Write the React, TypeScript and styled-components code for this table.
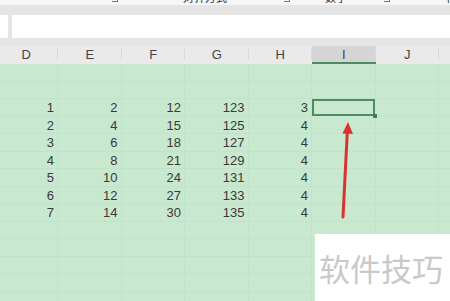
import React from "react";
import styled, { createGlobalStyle } from "styled-components";

const Global = createGlobalStyle`
  html, body { margin: 0; padding: 0; background: #ffffff; }
  body { font-family: "Liberation Sans", Arial, "Noto Sans CJK SC", sans-serif; }
`;

const Screen = styled.div`
  position: relative;
  width: 450px;
  height: 301px;
  overflow: hidden;
  background: #e5e5e5;
`;

const Ribbon = styled.div`
  display: flex;
  height: 5px;
  background: #f6f6f6;
  overflow: hidden;
  align-items: flex-end;
`;

const RibbonGroup = styled.div<{ $w: number; $pad: number }>`
  position: relative;
  flex: 0 0 ${(p) => p.$w}px;
  height: 14px;
  display: flex;
  align-items: flex-start;
  padding-left: ${(p) => p.$pad}px;
  box-sizing: border-box;
`;

const RibbonLabel = styled.span`
  font-family: "Noto Sans CJK SC", sans-serif;
  font-size: 11px;
  line-height: 12px;
  color: #333;
  white-space: nowrap;
`;

const Launcher = styled.span`
  position: absolute;
  right: 4px;
  top: 5px;
  width: 6px;
  height: 6px;
  border-right: 1px solid #777;
  border-bottom: 1px solid #777;
  box-sizing: border-box;
`;

const Band = styled.div<{ $h: number }>`
  height: ${(p) => p.$h}px;
  background: #e5e5e5;
`;

const FormulaRow = styled.div`
  display: flex;
  gap: 4px;
  height: 23px;
  background: #e5e5e5;
`;

const NameBox = styled.div`
  flex: 0 0 8px;
  background: #ffffff;
`;

const FormulaInput = styled.div`
  flex: 1;
  background: #ffffff;
`;

const COLS = [63.5, 63.5, 63.5, 63.5, 63.5, 63.5, 63.5, 63.5];
const template = COLS.map((c) => `${c}px`).join(" ");

const HeaderRow = styled.div`
  display: grid;
  grid-template-columns: ${template};
  margin-left: -5.5px;
  height: 18px;
  background: #eaeaea;
`;

const HeaderCell = styled.div<{ $sel?: boolean }>`
  display: flex;
  align-items: center;
  justify-content: center;
  box-sizing: border-box;
  font-size: 13px;
  color: #444;
  position: relative;
  background: ${(p) => (p.$sel ? "#d5d5d5" : "transparent")};
  border-bottom: 2px solid ${(p) => (p.$sel ? "#4c8c60" : "#eaeaea")};
  &::after {
    content: "";
    position: absolute;
    right: 0;
    top: 2px;
    bottom: 2px;
    width: 1px;
    background: #dadada;
  }
`;

const Sheet = styled.div`
  display: grid;
  grid-template-columns: ${template};
  grid-auto-rows: 17.5px;
  margin-left: -5.5px;
  background: #c8e8cf;
  height: 240px;
`;

const Cell = styled.div<{ $sel?: boolean }>`
  position: relative;
  box-sizing: border-box;
  border-right: 1px solid #c2e2c9;
  border-bottom: 1px solid #c2e2c9;
  font-size: 13px;
  line-height: 17px;
  color: #3a3a3a;
  text-align: right;
  padding-right: 3px;
  ${(p) =>
    p.$sel
      ? `
    z-index: 1;
    box-shadow: inset 0 0 0 2px #4c8c60;
    border-color: transparent;
  `
      : ""}
`;

const FillHandle = styled.span`
  position: absolute;
  right: -2px;
  bottom: -2px;
  width: 4px;
  height: 4px;
  background: #3f7f53;
`;

const Arrow = styled.svg`
  position: absolute;
  left: 0;
  top: 0;
  pointer-events: none;
  z-index: 2;
`;

const Watermark = styled.div`
  position: absolute;
  left: 315px;
  top: 234px;
  right: 0;
  bottom: 0;
  z-index: 2;
  background: #ffffff;
  display: flex;
  align-items: center;
  padding-left: 4px;
  font-family: "Noto Sans CJK SC", sans-serif;
  font-size: 31px;
  color: #c9c9c9;
  white-space: nowrap;
`;

const LETTERS = ["D", "E", "F", "G", "H", "I", "J", ""];
const DATA = [
  [1, 2, 12, 123, 3],
  [2, 4, 15, 125, 4],
  [3, 6, 18, 127, 4],
  [4, 8, 21, 129, 4],
  [5, 10, 24, 131, 4],
  [6, 12, 27, 133, 4],
  [7, 14, 30, 135, 4],
];

export default function App() {
  const rows: React.ReactNode[] = [];
  for (let r = 0; r < 14; r++) {
    const d = r >= 2 && r < 9 ? DATA[r - 2] : null;
    for (let c = 0; c < COLS.length; c++) {
      const sel = r === 2 && c === 5;
      rows.push(
        <Cell key={`${r}-${c}`} $sel={sel}>
          {d && c < 5 ? d[c] : ""}
          {sel ? <FillHandle /> : null}
        </Cell>
      );
    }
  }
  return (
    <Screen>
      <Global />
      <Ribbon>
        <RibbonGroup $w={122} $pad={0}>
          <Launcher />
        </RibbonGroup>
        <RibbonGroup $w={172} $pad={61}>
          <RibbonLabel>对齐方式</RibbonLabel>
          <Launcher />
        </RibbonGroup>
        <RibbonGroup $w={100} $pad={31}>
          <RibbonLabel>数字</RibbonLabel>
          <Launcher />
        </RibbonGroup>
        <RibbonGroup $w={60} $pad={52}>
          <RibbonLabel>样式</RibbonLabel>
        </RibbonGroup>
      </Ribbon>
      <Band $h={10} />
      <FormulaRow>
        <NameBox />
        <FormulaInput />
      </FormulaRow>
      <Band $h={8} />
      <HeaderRow>
        {LETTERS.map((l, i) => (
          <HeaderCell key={i} $sel={l === "I"}>
            {l}
          </HeaderCell>
        ))}
      </HeaderRow>
      <Sheet>{rows}</Sheet>
      <Arrow width="450" height="301" viewBox="0 0 450 301">
        <line x1="343" y1="217" x2="347.3" y2="132" stroke="#d8332f" strokeWidth="3" strokeLinecap="round" />
        <polygon points="348,122 353,134 342.5,133.5" fill="#d8332f" />
      </Arrow>
      <Watermark>软件技巧</Watermark>
    </Screen>
  );
}
